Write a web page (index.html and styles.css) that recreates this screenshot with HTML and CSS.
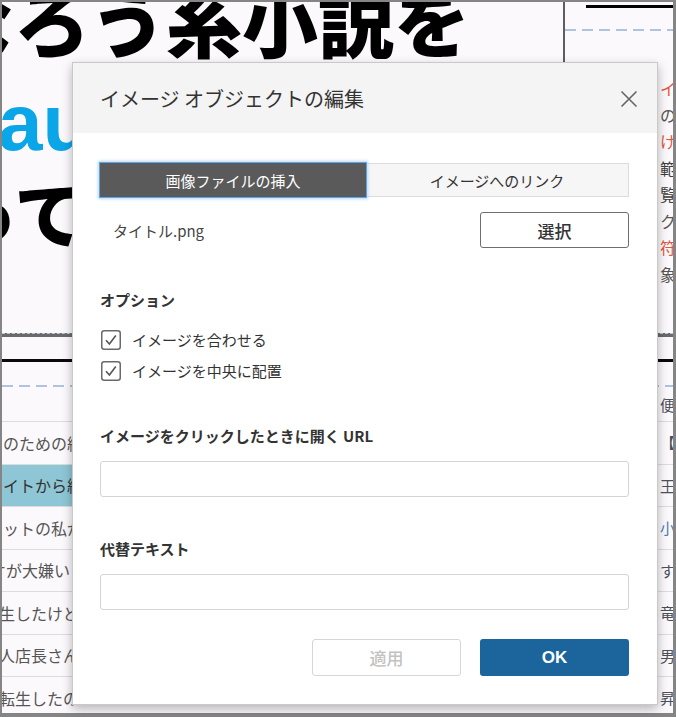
FILE: index.html
```html
<!DOCTYPE html>
<html lang="ja">
<head>
<meta charset="utf-8">
<title>イメージ オブジェクトの編集</title>
<link rel="stylesheet" href="styles.css">
</head>
<body>
<div class="screen">
  <div class="top">
    <div class="hero">
      <div class="h1">なろう系小説を</div>
      <div class="h2">Claude<span class="jp">で</span></div>
      <div class="h3">作ってみた</div>
    </div>
    <div class="side">
      <div class="side-bar"></div>
      <div class="dash"></div>
      <ul class="side-lines">
        <li class="red">イメ</li>
        <li>の作</li>
        <li class="red">けた</li>
        <li class="dark">範囲</li>
        <li class="dark">覧表</li>
        <li>クリ</li>
        <li class="red">符号</li>
        <li>象限</li>
      </ul>
    </div>
  </div>
  <div class="rule-gray"></div>
  <div class="rule-black"></div>
  <div class="dash"></div>
  <div class="table">
    <div class="row head"><div class="c1"></div><div class="c2">便利</div></div>
    <div class="row"><div class="c1">のための結婚</div><div class="c2">【フ</div></div>
    <div class="row sel"><div class="c1">イトから結婚</div><div class="c2">王子</div></div>
    <div class="row"><div class="c1">ットの私が</div><div class="c2 blue">小説</div></div>
    <div class="row"><div class="c1 cut">オが大嫌い</div><div class="c2">す</div></div>
    <div class="row"><div class="c1 cut2">生したけど</div><div class="c2">竜</div></div>
    <div class="row"><div class="c1 cut2">人店長さん</div><div class="c2">男</div></div>
    <div class="row"><div class="c1 cut2">転生したの</div><div class="c2">昇</div></div>
  </div>
</div>

<div class="dialog">
  <div class="dlg-head">
    <span class="dlg-title">イメージ オブジェクトの編集</span>
    <svg class="close" width="18" height="18" viewBox="0 0 18 18"><path d="M1.5 1.5 L16.5 16.5 M16.5 1.5 L1.5 16.5" stroke="#666" stroke-width="1.6" fill="none"/></svg>
  </div>
  <div class="dlg-body">
    <div class="tabs">
      <div class="tab active">画像ファイルの挿入</div>
      <div class="tab">イメージへのリンク</div>
    </div>
    <div class="file-row">
      <span class="fname">タイトル.png</span>
      <button class="btn">選択</button>
    </div>
    <div class="lbl opt">オプション</div>
    <div class="check first">
      <svg class="box" width="20" height="20" viewBox="0 0 20 20"><rect x="0.75" y="0.75" width="18.5" height="18.5" rx="2.5" fill="#fff" stroke="#6a6a6a" stroke-width="1.5"/><path d="M5 10.2 L8.4 14 L14.8 5.5" stroke="#555" stroke-width="1.6" fill="none"/></svg>
      <span>イメージを合わせる</span>
    </div>
    <div class="check">
      <svg class="box" width="20" height="20" viewBox="0 0 20 20"><rect x="0.75" y="0.75" width="18.5" height="18.5" rx="2.5" fill="#fff" stroke="#6a6a6a" stroke-width="1.5"/><path d="M5 10.2 L8.4 14 L14.8 5.5" stroke="#555" stroke-width="1.6" fill="none"/></svg>
      <span>イメージを中央に配置</span>
    </div>
    <div class="lbl url">イメージをクリックしたときに開く URL</div>
    <div class="input"></div>
    <div class="lbl alt">代替テキスト</div>
    <div class="input"></div>
    <div class="actions">
      <button class="btn apply">適用</button>
      <button class="btn ok">OK</button>
    </div>
  </div>
</div>
</body>
</html>
```

FILE: styles.css
```css
html, body {
  margin: 0;
  padding: 0;
}
body {
  width: 676px;
  height: 717px;
  overflow: hidden;
  position: relative;
  font-family: "Noto Sans CJK JP", "Noto Sans", sans-serif;
  background: #fcf9fc;
}
.screen {
  width: 676px;
  height: 717px;
  box-sizing: border-box;
  border: 2px solid #858585;
  border-right-width: 3px;
  border-bottom-width: 4px;
  background: #fcf9fc;
  overflow: hidden;
}
.top {
  display: grid;
  grid-template-columns: 563px 1fr;
  height: 331px;
}
.hero {
  overflow: hidden;
  border-right: 2px solid #5e5e5e;
  color: #000;
  font-weight: 900;
}
.h1 {
  font-family: "Noto Sans CJK JP", sans-serif;
  font-size: 76px;
  line-height: 76px;
  height: 76px;
  white-space: nowrap;
  margin-top: -21px;
  margin-left: -64px;
}
.h2 {
  font-family: "Liberation Sans", "Noto Sans CJK JP", sans-serif;
  font-weight: 700;
  font-size: 80px;
  line-height: 80px;
  height: 80px;
  white-space: nowrap;
  color: #0aa6e8;
  margin-top: 22px;
  margin-left: -84px;
}
.h2 .jp {
  font-family: "Noto Sans CJK JP", sans-serif;
  color: #000;
  font-size: 72px;
}
.h3 {
  font-family: "Noto Sans CJK JP", sans-serif;
  font-size: 72px;
  line-height: 72px;
  height: 72px;
  white-space: nowrap;
  margin-top: 16px;
  margin-left: -128px;
}
.side {
  overflow: hidden;
  padding-top: 3px;
}
.side-bar {
  height: 3px;
  background: #000;
  margin-left: 21px;
}
.dash {
  height: 2px;
  background: repeating-linear-gradient(90deg, #aec3df 0 11px, transparent 11px 17px);
}
.side .dash {
  margin-top: 21px;
}
.side-lines {
  list-style: none;
  margin: 44px 0 0;
  padding: 0 0 0 95px;
  font-size: 16px;
  line-height: 26.5px;
  color: #555;
  white-space: nowrap;
}
.side-lines .red { color: #e0583f; }
.side-lines .dark { color: #3e3e3e; }
.rule-gray {
  height: 3px;
  background: #6a6a6a;
  border-top: 1px dashed #b8c6dc;
}
.rule-black {
  height: 3px;
  background: #0a0a0a;
  margin-top: 22px;
  margin-bottom: 23px;
}
.table {
  font-size: 16px;
  color: #555;
}
.row {
  display: grid;
  grid-template-columns: 563px 1fr;
  height: 42.5px;
  box-sizing: border-box;
  border-bottom: 1px solid #dcdcdc;
  align-items: center;
  white-space: nowrap;
}
.row.head {
  height: 35px;
}
.row.sel .c1 {
  background: #8ec6d6;
  color: #333;
  align-self: stretch;
  display: flex;
  align-items: center;
}
.c1 {
  padding-left: 1px;
  overflow: hidden;
}
.c1.cut { text-indent: -13px; }
.c1.cut2 { text-indent: -4px; }
.c2 {
  padding-left: 95px;
  font-size: 15px;
  color: #4a505c;
  overflow: hidden;
}
.c2.blue { color: #4a7bb5; }

/* dialog */
.dialog {
  position: absolute;
  left: 72px;
  top: 62px;
  width: 586px;
  height: 643px;
  box-sizing: border-box;
  background: #fff;
  border: 1px solid #c9c9c9;
  box-shadow: 0 4px 10px rgba(0, 0, 0, 0.28);
  font-family: "Noto Sans CJK JP", "Noto Sans", sans-serif;
  color: #333;
}
.dlg-head {
  height: 70px;
  background: #f4f4f4;
  display: flex;
  align-items: center;
  justify-content: space-between;
  padding: 0 19px 0 27px;
}
.dlg-title {
  font-size: 20px;
  color: #333;
  padding-top: 1px;
}
.close {
  display: block;
  margin-top: 2px;
}
.dlg-body {
  padding: 30px 28px 0 27px;
}
.tabs {
  display: grid;
  grid-template-columns: 266px 1fr;
  height: 34px;
  font-size: 15px;
}
.tab {
  display: flex;
  align-items: center;
  justify-content: center;
  background: #f6f6f6;
  border: 1px solid #dcdcdc;
  border-left: none;
  color: #333;
}
.tab.active {
  background: #5a5a5a;
  color: #fff;
  border: none;
  box-shadow: 0 0 0 1px #5ba5e6, 0 0 3px 2px #b5d8f6;
  position: relative;
}
.file-row {
  display: flex;
  justify-content: space-between;
  align-items: center;
  margin-top: 15px;
}
.fname {
  padding-left: 13px;
  font-size: 15px;
  color: #444;
}
.btn {
  width: 149px;
  height: 36px;
  box-sizing: border-box;
  border: 1px solid #6e6e6e;
  border-radius: 3px;
  background: #fff;
  font-family: "Noto Sans CJK JP", sans-serif;
  font-size: 17px;
  font-weight: 500;
  color: #333;
  padding: 0;
}
.lbl {
  font-size: 15px;
  font-weight: 700;
  line-height: 22px;
  color: #333;
}
.lbl.opt { margin-top: 41px; }
.check {
  display: flex;
  align-items: center;
  gap: 11px;
  height: 31px;
  font-size: 15px;
  color: #333;
}
.check.first { margin-top: 13px; }
.box {
  display: block;
  margin-left: 1px;
}
.lbl.url { margin-top: 39px; }
.lbl.alt { margin-top: 41px; }
.input {
  height: 36px;
  box-sizing: border-box;
  border: 1.5px solid #d4d4d4;
  border-radius: 3px;
  margin-top: 14px;
}
.actions {
  display: flex;
  justify-content: flex-end;
  gap: 19px;
  margin-top: 29px;
}
.btn.apply {
  height: 37px;
  border-color: #d6d6d6;
  color: #c2c2c2;
}
.btn.ok {
  height: 37px;
  border: none;
  background: #1b659c;
  color: #fff;
  font-family: "Liberation Sans", "Noto Sans", sans-serif;
  font-weight: 700;
  font-size: 17px;
}
```
